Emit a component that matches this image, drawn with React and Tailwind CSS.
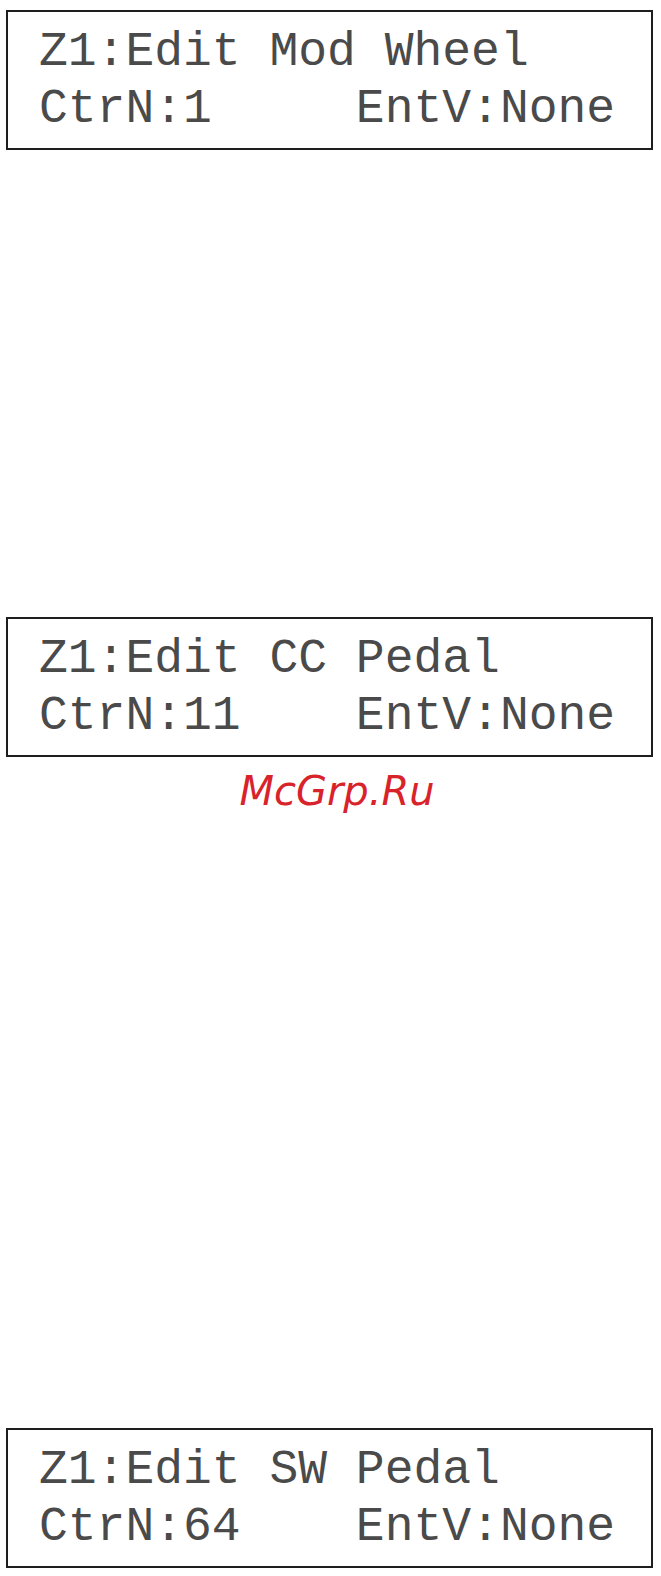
import React from "react";

// two-line LCD readouts for the controller edit pages
const screens = [
  { title: "Z1:Edit Mod Wheel", ctrl: "CtrN:1     EntV:None" },
  { title: "Z1:Edit CC Pedal", ctrl: "CtrN:11    EntV:None" },
  { title: "Z1:Edit SW Pedal", ctrl: "CtrN:64    EntV:None" },
];

function LcdScreen({ title, ctrl }) {
  return (
    <div className="ml-[6px] w-[647px] h-[140px] border-2 border-[#1e1e1e] bg-white pt-[12px] pl-[31px]">
      <div
        className="whitespace-pre text-[48px] leading-[57px] text-[#4a4a4a]"
        style={{
          fontFamily:
            '"Courier New", "Nimbus Mono PS", "Nimbus Mono L", FreeMono, "Liberation Mono", monospace',
        }}
      >
        <div>{title}</div>
        <div>{ctrl}</div>
      </div>
    </div>
  );
}

export default function App() {
  return (
    <div className="w-[661px] h-[1576px] bg-white pt-[10px]">
      <LcdScreen {...screens[0]} />
      <div className="h-[467px]" />
      <LcdScreen {...screens[1]} />
      <div
        className="mt-[14px] pl-[13px] text-center text-[40px] leading-[40px] italic text-[#d9232b]"
        style={{ fontFamily: '"DejaVu Sans", sans-serif' }}
      >
        McGrp.Ru
      </div>
      <div className="h-[617px]" />
      <LcdScreen {...screens[2]} />
    </div>
  );
}
